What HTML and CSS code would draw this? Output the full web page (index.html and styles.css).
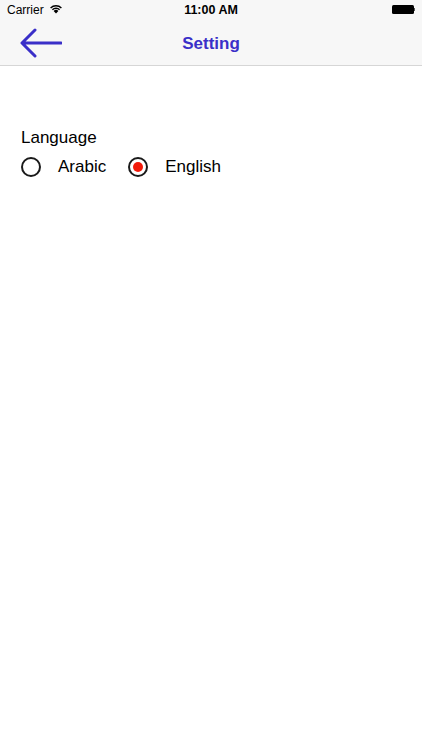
FILE: index.html
```html
<!DOCTYPE html>
<html>
<head>
<meta charset="utf-8">
<link rel="stylesheet" href="styles.css">
</head>
<body>
<div class="status">
  <div class="status-left">
    <span>Carrier</span>
    <svg class="wifi" width="14" height="10" viewBox="0 0 14 10">
      <path d="M7 9.5 L4.6 6.9 A3.4 3.4 0 0 1 9.4 6.9 Z" fill="#000"/>
      <path d="M2.9 5.2 A5.8 5.8 0 0 1 11.1 5.2 L10.1 6.2 A4.4 4.4 0 0 0 3.9 6.2 Z" fill="#000"/>
      <path d="M1.1 3.4 A8.4 8.4 0 0 1 12.9 3.4 L11.9 4.4 A7 7 0 0 0 2.1 4.4 Z" fill="#000"/>
    </svg>
  </div>
  <div class="status-time">11:00 AM</div>
  <div class="status-right">
    <div class="battery"></div>
    <div class="battery-tip"></div>
  </div>
</div>
<div class="nav">
  <svg class="back" width="42" height="30" viewBox="0 0 42 30">
    <path d="M41 15 H3 M15 2 L2 15 L15 28" fill="none" stroke="#3a2fc8" stroke-width="3" stroke-linecap="round" stroke-linejoin="round"/>
  </svg>
  <div class="title">Setting</div>
</div>
<div class="content">
  <div class="label">Language</div>
  <div class="options">
    <div class="option"><span class="radio"></span><span>Arabic</span></div>
    <div class="option"><span class="radio checked"></span><span>English</span></div>
  </div>
</div>
</body>
</html>
```
FILE: styles.css
```css
html, body { margin: 0; padding: 0; background: #fff; }
body { font-family: "Liberation Sans", Arial, sans-serif; color: #000; width: 422px; }
.status {
  height: 20px; background: #f7f7f7; display: flex; align-items: center;
  justify-content: space-between; padding: 0 7px 0 7px; box-sizing: border-box; position: relative;
  font-size: 12px;
}
.status-left { display: flex; align-items: center; gap: 5px; }
.wifi { margin-top: -2px; }
.status-time {
  position: absolute; left: 0; right: 0; text-align: center; font-weight: bold; font-size: 12.5px;
}
.status-right { display: flex; align-items: center; margin-top: -2px; }
.battery { width: 22px; height: 9px; background: #000; border-radius: 1.5px; }
.battery-tip { width: 1.5px; height: 3px; background: #555; }
.nav {
  height: 45px; background: #f7f7f7; border-bottom: 1px solid #d6d6d6;
  display: flex; align-items: center; justify-content: center; position: relative;
}
.back { position: absolute; left: 20px; top: 8px; }
.title { color: #3a2fc8; font-weight: bold; font-size: 17px; margin-top: 2px; }
.content { padding: 62px 21px 0; }
.label { font-size: 17px; line-height: 20px; }
.options { display: flex; align-items: center; margin-top: 9px; gap: 22px; }
.option { display: flex; align-items: center; gap: 17px; font-size: 17px; }
.radio {
  width: 20px; height: 20px; border: 2px solid #1a1a1a; border-radius: 50%; box-sizing: border-box;
  display: flex; align-items: center; justify-content: center;
}
.radio.checked::after {
  content: ""; width: 10px; height: 10px; border-radius: 50%; background: #f21a0a;
}
```
